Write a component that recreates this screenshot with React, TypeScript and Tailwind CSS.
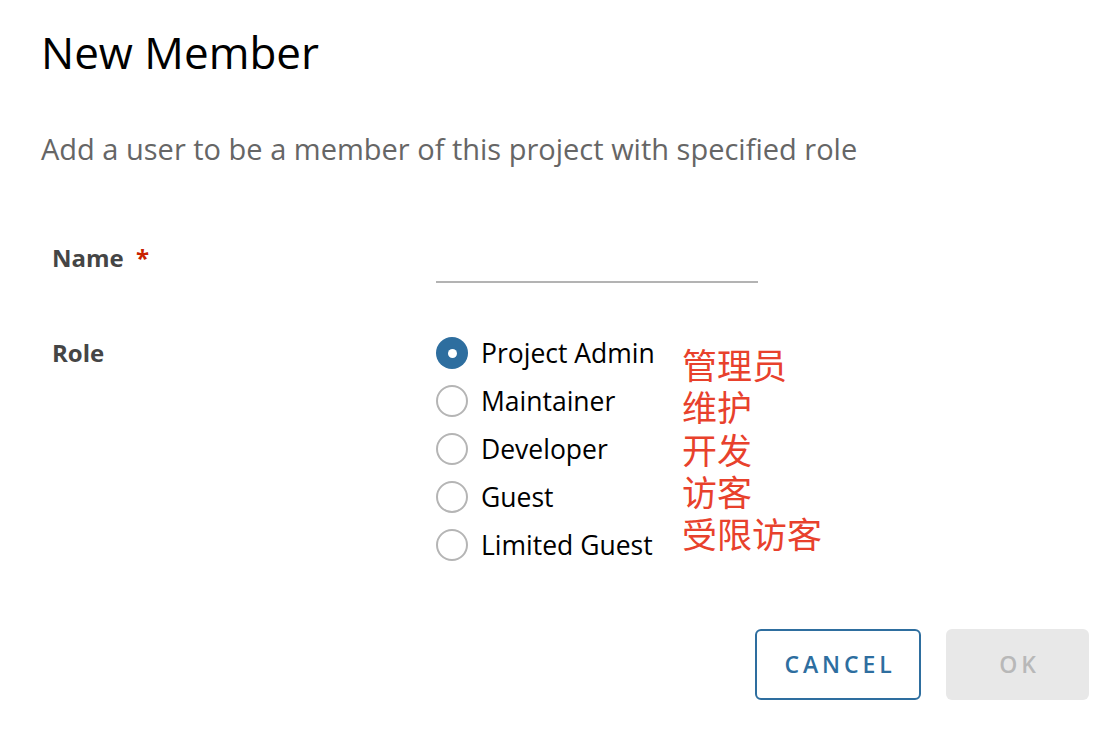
const roles = [
  { label: 'Project Admin', checked: true },
  { label: 'Maintainer', checked: false },
  { label: 'Developer', checked: false },
  { label: 'Guest', checked: false },
  { label: 'Limited Guest', checked: false },
];

const notes = ['管理员', '维护', '开发', '访客', '受限访客'];

function Radio({ checked }: { checked: boolean }) {
  if (checked) {
    return (
      <span className="flex h-[32px] w-[32px] shrink-0 items-center justify-center rounded-full bg-[#2e6e9f]">
        <span className="h-[9px] w-[9px] rounded-full bg-white" />
      </span>
    );
  }
  return <span className="h-[32px] w-[32px] shrink-0 rounded-full border-2 border-[#b5b5b5] bg-white" />;
}

export default function App() {
  return (
    <div className="h-[734px] w-[1116px] bg-white pl-[41px] pt-[26px] font-['Open_Sans',sans-serif]">
      <h1 className="text-[44px] leading-[52px] text-black">New Member</h1>
      <p className="mt-[53px] text-[29px] leading-[36px] text-[#666666]">
        Add a user to be a member of this project with specified role
      </p>

      <div className="mt-[75px] pl-[11px]">
        {/* Name */}
        <div className="flex items-start">
          <div className="w-[384px] text-[24px] font-bold leading-[32px] text-[#454545]">
            Name <span className="ml-[6px] text-[#c92100]">*</span>
          </div>
          <div className="mt-[39px] h-[2px] w-[322px] bg-[#b3b3b3]" />
        </div>

        {/* Role */}
        <div className="mt-[54px] flex items-start">
          <div className="w-[384px] text-[24px] font-bold leading-[32px] text-[#454545]">Role</div>
          <div className="flex w-[246px] flex-col gap-[16px]">
            {roles.map((r) => (
              <label key={r.label} className="flex items-center gap-[13px]">
                <Radio checked={r.checked} />
                <span className="text-[26.5px] leading-[32px] text-black">{r.label}</span>
              </label>
            ))}
          </div>
          <div className="mt-[6px] flex flex-col font-['Noto_Sans_CJK_SC',sans-serif] text-[35px] leading-[42.3px] text-[#e8412c]">
            {notes.map((n) => (
              <span key={n}>{n}</span>
            ))}
          </div>
        </div>
      </div>

      <div className="mt-[68px] flex justify-end gap-[25px] pr-[27px]">
        <button className="h-[71px] w-[166px] rounded-[6px] border-2 border-[#2e6e9f] bg-white pl-[4px] text-[23px] font-semibold tracking-[0.17em] text-[#2e6e9f]">
          CANCEL
        </button>
        <button className="h-[71px] w-[143px] rounded-[6px] bg-[#e8e8e8] pl-[4px] text-[23px] font-semibold tracking-[0.17em] text-[#b8b8b8]">
          OK
        </button>
      </div>
    </div>
  );
}
